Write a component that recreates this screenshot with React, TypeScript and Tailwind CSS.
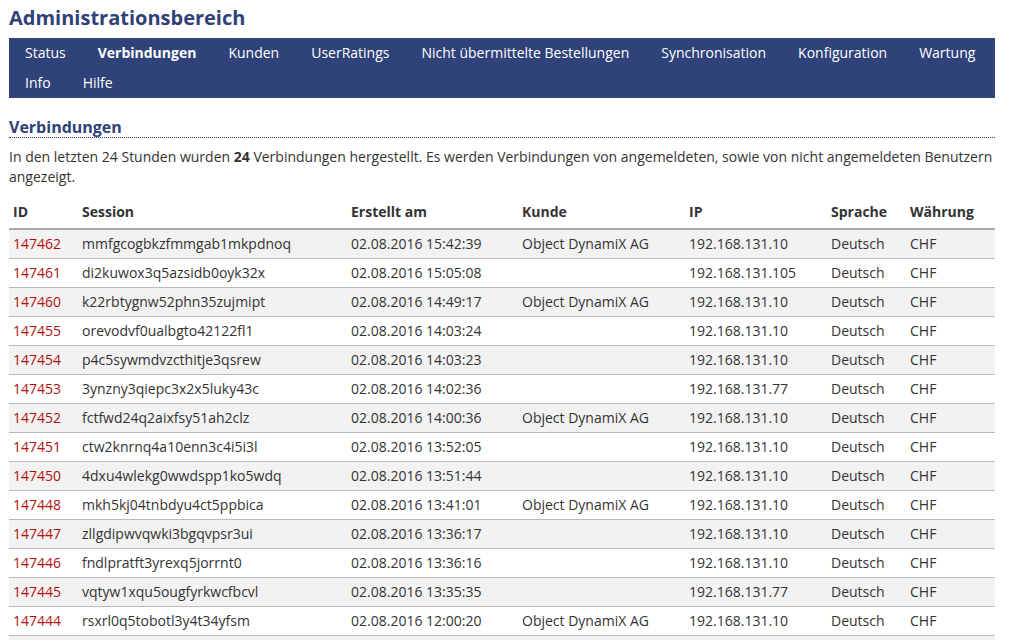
const navItems = [
  "Status",
  "Verbindungen",
  "Kunden",
  "UserRatings",
  "Nicht übermittelte Bestellungen",
  "Synchronisation",
  "Konfiguration",
  "Wartung",
  "Info",
  "Hilfe",
];

const rows: [string, string, string, string, string][] = [
  ["147462", "mmfgcogbkzfmmgab1mkpdnoq", "02.08.2016 15:42:39", "Object DynamiX AG", "192.168.131.10"],
  ["147461", "di2kuwox3q5azsidb0oyk32x", "02.08.2016 15:05:08", "", "192.168.131.105"],
  ["147460", "k22rbtygnw52phn35zujmipt", "02.08.2016 14:49:17", "Object DynamiX AG", "192.168.131.10"],
  ["147455", "orevodvf0ualbgto42122fl1", "02.08.2016 14:03:24", "", "192.168.131.10"],
  ["147454", "p4c5sywmdvzcthitje3qsrew", "02.08.2016 14:03:23", "", "192.168.131.10"],
  ["147453", "3ynzny3qiepc3x2x5luky43c", "02.08.2016 14:02:36", "", "192.168.131.77"],
  ["147452", "fctfwd24q2aixfsy51ah2clz", "02.08.2016 14:00:36", "Object DynamiX AG", "192.168.131.10"],
  ["147451", "ctw2knrnq4a10enn3c4i5i3l", "02.08.2016 13:52:05", "", "192.168.131.10"],
  ["147450", "4dxu4wlekg0wwdspp1ko5wdq", "02.08.2016 13:51:44", "", "192.168.131.10"],
  ["147448", "mkh5kj04tnbdyu4ct5ppbica", "02.08.2016 13:41:01", "Object DynamiX AG", "192.168.131.10"],
  ["147447", "zllgdipwvqwki3bgqvpsr3ui", "02.08.2016 13:36:17", "", "192.168.131.10"],
  ["147446", "fndlpratft3yrexq5jorrnt0", "02.08.2016 13:36:16", "", "192.168.131.10"],
  ["147445", "vqtyw1xqu5ougfyrkwcfbcvl", "02.08.2016 13:35:35", "", "192.168.131.77"],
  ["147444", "rsxrl0q5tobotl3y4t34yfsm", "02.08.2016 12:00:20", "Object DynamiX AG", "192.168.131.10"],
  ["147443", "h2ld0xq4mbw3ykc1sgtpoe5n", "02.08.2016 11:58:12", "", "192.168.131.10"],
];

export default function App() {
  return (
    <div
      className="min-h-screen bg-white pl-[9px] pr-[15px] text-[14px] text-[#333]"
      style={{ fontFamily: '"Open Sans", "Noto Sans", sans-serif' }}
    >
      <h1 className="pt-[5px] text-[20px] leading-[26px] font-bold text-[#2f4178]">Administrationsbereich</h1>

      {/* Navigation */}
      <nav className="mt-[7px] flex flex-wrap bg-[#2f4279]">
        {navItems.map((item) => (
          <a
            key={item}
            className={
              "px-[16px] leading-[30px] text-white " +
              (item === "Verbindungen" ? "font-bold" : "")
            }
          >
            {item}
          </a>
        ))}
      </nav>

      {/* Section */}
      <h2 className="mt-[20px] border-b border-dotted border-[#2f4178] text-[16px] leading-[19px] font-bold text-[#2f4178]">
        Verbindungen
      </h2>
      <p className="mt-[9px] leading-[20px]">
        In den letzten 24 Stunden wurden <b>24</b> Verbindungen hergestellt. Es werden Verbindungen von angemeldeten,
        sowie von nicht angemeldeten Benutzern angezeigt.
      </p>

      <table className="mt-[11px] w-full table-fixed border-collapse">
        <colgroup>
          <col className="w-[69px]" />
          <col className="w-[269px]" />
          <col className="w-[171px]" />
          <col className="w-[167px]" />
          <col className="w-[142px]" />
          <col className="w-[79px]" />
          <col />
        </colgroup>
        <thead>
          <tr className="border-b-2 border-[#aaa] text-left">
            {["ID", "Session", "Erstellt am", "Kunde", "IP", "Sprache", "Währung"].map((h) => (
              <th key={h} className="px-[4px] pb-[6px] pt-[4px] leading-[20px] font-bold">
                {h}
              </th>
            ))}
          </tr>
        </thead>
        <tbody>
          {rows.map((r, i) => (
            <tr key={r[0]} className={"border-b border-[#bbb] " + (i % 2 === 0 ? "bg-[#f2f2f2]" : "bg-white")}>
              <td className="px-[4px] py-[4px] leading-[20px] text-[#b30f0f]">{r[0]}</td>
              <td className="px-[4px] py-[4px] leading-[20px]">{r[1]}</td>
              <td className="px-[4px] py-[4px] leading-[20px]">{r[2]}</td>
              <td className="px-[4px] py-[4px] leading-[20px]">{r[3]}</td>
              <td className="px-[4px] py-[4px] leading-[20px]">{r[4]}</td>
              <td className="px-[4px] py-[4px] leading-[20px]">Deutsch</td>
              <td className="px-[4px] py-[4px] leading-[20px]">CHF</td>
            </tr>
          ))}
        </tbody>
      </table>
    </div>
  );
}
